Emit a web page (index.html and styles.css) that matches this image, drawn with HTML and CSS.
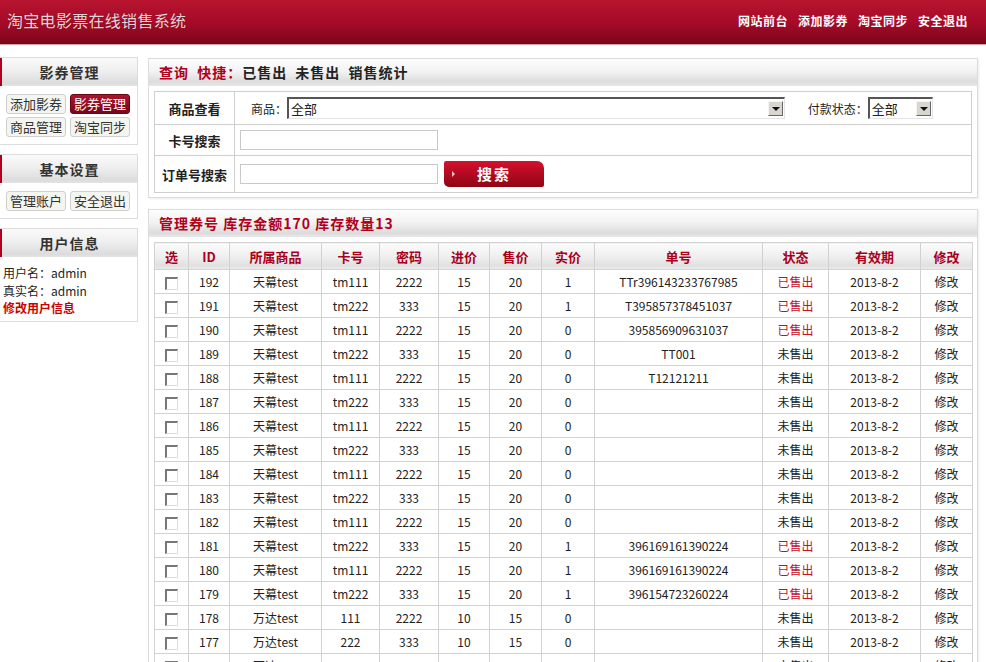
FILE: index.html
```html
<!DOCTYPE html>
<html lang="zh-CN">
<head>
  <meta charset="UTF-8">
  <title>淘宝电影票在线销售系统</title>
  <link rel="stylesheet" href="styles.css">
</head>
<body>
  <div class="topbar">
    <div class="logo">淘宝电影票在线销售系统</div>
    <div class="topnav">
      <a href="#">网站前台</a><a href="#">添加影券</a><a href="#">淘宝同步</a><a href="#">安全退出</a>
    </div>
  </div>

  <div class="layout">
    <aside class="sidebar">
      <div class="side-box">
        <div class="side-title">影券管理</div>
        <div class="side-btns">
          <a class="side-btn" href="#">添加影券</a>
          <a class="side-btn active" href="#">影券管理</a>
          <a class="side-btn" href="#">商品管理</a>
          <a class="side-btn" href="#">淘宝同步</a>
        </div>
      </div>
      <div class="side-box">
        <div class="side-title">基本设置</div>
        <div class="side-btns">
          <a class="side-btn" href="#">管理账户</a>
          <a class="side-btn" href="#">安全退出</a>
        </div>
      </div>
      <div class="side-box">
        <div class="side-title">用户信息</div>
        <div class="side-info">
          <p>用户名：admin</p>
          <p>真实名：admin</p>
          <p><a class="red-link" href="#">修改用户信息</a></p>
        </div>
      </div>
    </aside>

    <main class="main">
      <div class="panel">
        <div class="panel-title query-title"><span class="red">查询 快捷：</span>已售出 未售出 销售统计</div>
        <div class="panel-body">
          <table class="query">
            <tr class="q1">
              <th>商品查看</th>
              <td>
                <span class="field-label first">商品：</span><span class="select wide"><span class="select-val">全部</span><span class="select-arrow"></span></span>
                <span class="field-label pay">付款状态：</span><span class="select small"><span class="select-val">全部</span><span class="select-arrow"></span></span>
              </td>
            </tr>
            <tr class="q2">
              <th>卡号搜索</th>
              <td><span class="text-input"></span></td>
            </tr>
            <tr class="q3">
              <th>订单号搜索</th>
              <td><span class="text-input"></span><span class="search-btn">搜索</span></td>
            </tr>
          </table>
        </div>
      </div>

      <div class="panel">
        <div class="panel-title red">管理券号 库存金额170 库存数量13</div>
        <div class="panel-body">
          <table class="list">
            <colgroup>
              <col style="width:34px"><col style="width:41px"><col style="width:92px"><col style="width:58px">
              <col style="width:59px"><col style="width:51px"><col style="width:52px"><col style="width:53px">
              <col style="width:168px"><col style="width:66px"><col style="width:92px"><col style="width:52px">
            </colgroup>
            <thead>
              <tr>
                <th>选</th><th>ID</th><th>所属商品</th><th>卡号</th><th>密码</th><th>进价</th>
                <th>售价</th><th>实价</th><th>单号</th><th>状态</th><th>有效期</th><th>修改</th>
              </tr>
            </thead>
            <tbody id="rows"></tbody>
          </table>
        </div>
      </div>
    </main>
  </div>

  <script>
    const tickets = [
      [192, "天幕test", "tm111", "2222", 15, 20, 1, "TTr396143233767985", true],
      [191, "天幕test", "tm222", "333", 15, 20, 1, "T395857378451037", true],
      [190, "天幕test", "tm111", "2222", 15, 20, 0, "395856909631037", true],
      [189, "天幕test", "tm222", "333", 15, 20, 0, "TT001", false],
      [188, "天幕test", "tm111", "2222", 15, 20, 0, "T12121211", false],
      [187, "天幕test", "tm222", "333", 15, 20, 0, "", false],
      [186, "天幕test", "tm111", "2222", 15, 20, 0, "", false],
      [185, "天幕test", "tm222", "333", 15, 20, 0, "", false],
      [184, "天幕test", "tm111", "2222", 15, 20, 0, "", false],
      [183, "天幕test", "tm222", "333", 15, 20, 0, "", false],
      [182, "天幕test", "tm111", "2222", 15, 20, 0, "", false],
      [181, "天幕test", "tm222", "333", 15, 20, 1, "396169161390224", true],
      [180, "天幕test", "tm111", "2222", 15, 20, 1, "396169161390224", true],
      [179, "天幕test", "tm222", "333", 15, 20, 1, "396154723260224", true],
      [178, "万达test", "111", "2222", 10, 15, 0, "", false],
      [177, "万达test", "222", "333", 10, 15, 0, "", false],
      [176, "万达test", "111", "2222", 10, 15, 0, "", false],
      [175, "万达test", "222", "333", 10, 15, 0, "", false]
    ];

    const body = document.getElementById("rows");

    tickets.forEach(t => {
      const tr = document.createElement("tr");
      const status = t[8]
        ? '<td class="sold">已售出</td>'
        : '<td>未售出</td>';
      tr.innerHTML =
        '<td><span class="chk"></span></td>' +
        `<td>${t[0]}</td><td>${t[1]}</td><td>${t[2]}</td><td>${t[3]}</td>` +
        `<td>${t[4]}</td><td>${t[5]}</td><td>${t[6]}</td><td>${t[7]}</td>` +
        status +
        '<td>2013-8-2</td><td>修改</td>';
      body.appendChild(tr);
    });
  </script>
</body>
</html>
```

FILE: styles.css
```css
body {
  margin: 0;
  font-family: "Noto Sans CJK SC", "Liberation Sans", sans-serif;
  font-size: 12px;
  color: #222;
  background: #fff;
  overflow: hidden;
}

a {
  color: inherit;
  text-decoration: none;
}

p {
  margin: 0;
}

.red {
  color: #b0001c;
}

/* top bar */
.topbar {
  height: 40px;
  padding: 0 18px 4px 7px;
  display: flex;
  align-items: center;
  justify-content: space-between;
  background: linear-gradient(#b8142f, #a60b28 50%, #7c0519);
  border-bottom: 1px solid #d7a3ab;
}

.logo {
  font-size: 16px;
  color: #e9d3d7;
  letter-spacing: 0.3px;
  text-shadow: 0 0 1px rgba(80, 0, 10, 0.6);
}

.topnav a {
  color: #fff;
  font-weight: bold;
  font-size: 12px;
  letter-spacing: 0.5px;
  margin-left: 10px;
}

/* layout */
.layout {
  display: flex;
  gap: 10px;
  padding-top: 12px;
}

.sidebar {
  width: 138px;
  flex: none;
}

.side-box {
  border: 1px solid #dcdcdc;
  border-left: none;
  margin-bottom: 9px;
}

.side-title {
  height: 28px;
  line-height: 28px;
  text-align: center;
  font-size: 14px;
  font-weight: bold;
  letter-spacing: 1px;
  color: #333;
  border-left: 2px solid #b0001c;
  background: linear-gradient(#fafafa, #efefef 45%, #dcdcdc 90%, #e4e4e4);
}

.side-btns {
  display: flex;
  flex-wrap: wrap;
  gap: 3px 4px;
  padding: 8px 0 7px 6px;
}

.side-btn {
  width: 58px;
  height: 18px;
  line-height: 18px;
  text-align: center;
  font-size: 13px;
  color: #333;
  background: #f5f5ef;
  border: 1px solid #cfcfcf;
  border-radius: 3px;
}

.side-btn.active {
  color: #fff;
  background: linear-gradient(#a8162f, #7a0519);
  border-color: #6a0414;
}

.side-info {
  padding: 7px 0 4px 3px;
  line-height: 17.5px;
}

.red-link {
  color: #c00;
  font-weight: bold;
}

/* main panels */
.main {
  width: 830px;
  margin-top: 1px;
}

.panel {
  border: 1px solid #dcdcdc;
  margin-bottom: 11px;
  box-shadow: 1px 1px 2px rgba(0, 0, 0, 0.08);
}

.panel-title {
  height: 27px;
  line-height: 27px;
  padding-left: 10px;
  font-size: 14px;
  font-weight: bold;
  letter-spacing: 1px;
  background: linear-gradient(#fdfdfd, #f3f3f3 45%, #dcdcdc 85%, #e8e8e8);
}

.query-title {
  word-spacing: 4px;
}

.panel-body {
  padding: 5px 5px 4px;
}

/* query form */
.query {
  width: 100%;
  border-collapse: collapse;
  border: 1px solid #cfcfcf;
}

.query th,
.query td {
  border: 1px solid #cfcfcf;
  padding: 0;
}

.query th {
  width: 79px;
  font-size: 13px;
  font-weight: bold;
  color: #222;
}

.query td {
  padding-left: 5px;
  white-space: nowrap;
}

.q1 { height: 33px; }
.q2 { height: 31px; }
.q3 { height: 37px; }

.field-label {
  display: inline-block;
  vertical-align: middle;
}

.field-label.first {
  margin-left: 11px;
}

.field-label.pay {
  margin-left: 20px;
}

.select {
  display: inline-flex;
  align-items: center;
  vertical-align: middle;
  height: 17px;
  background: #fff;
  border-top: 2px solid #555;
  border-left: 2px solid #555;
  border-right: 1px solid #e4e4e4;
  border-bottom: 1px solid #e4e4e4;
  padding: 1px;
}

.select.wide {
  width: 493px;
}

.select.small {
  width: 60px;
}

.select-val {
  flex: 1;
  padding-left: 1px;
  font-size: 13px;
}

.select-arrow {
  width: 13px;
  height: 13px;
  position: relative;
  background: #d8d6ce;
  border: 1px solid;
  border-color: #f4f4f4 #666 #666 #f4f4f4;
}

.select-arrow::after {
  content: "";
  position: absolute;
  left: 3px;
  top: 5px;
  border-left: 4px solid transparent;
  border-right: 4px solid transparent;
  border-top: 4px solid #111;
}

.text-input {
  display: inline-block;
  vertical-align: middle;
  width: 196px;
  height: 18px;
  border: 1px solid #c9c9c9;
  background: #fff;
}

.search-btn {
  display: inline-block;
  vertical-align: middle;
  position: relative;
  width: 100px;
  height: 26px;
  line-height: 26px;
  margin-left: 6px;
  text-align: center;
  font-size: 15px;
  font-weight: bold;
  letter-spacing: 2px;
  color: #fff;
  background: linear-gradient(#d4122e, #b70a22 45%, #8e0516);
  border-radius: 2px 7px 2px 5px;
}

.search-btn::before {
  content: "";
  position: absolute;
  left: 8px;
  top: 10px;
  border-left: 3px solid #f3c7cd;
  border-top: 3px solid transparent;
  border-bottom: 3px solid transparent;
}

/* ticket list */
.list {
  width: 818px;
  table-layout: fixed;
  border-collapse: collapse;
  border: 1px solid #cfcfcf;
}

.list th,
.list td {
  border: 1px solid #d2d2d2;
  padding: 0;
  text-align: center;
  white-space: nowrap;
  overflow: hidden;
}

.list th {
  height: 26px;
  font-size: 13px;
  font-weight: bold;
  color: #a8001c;
  background: linear-gradient(#fbfbfb, #eeeeee 55%, #e0e0e0 85%, #ececec);
}

.list td {
  height: 23px;
  font-size: 12px;
  color: #222;
}

.list td.sold {
  color: #c8101e;
}

.chk {
  display: inline-block;
  vertical-align: middle;
  width: 10px;
  height: 10px;
  background: #fff;
  border-top: 2px solid #777;
  border-left: 2px solid #777;
  border-right: 1px solid #ddd;
  border-bottom: 1px solid #ddd;
}
```
